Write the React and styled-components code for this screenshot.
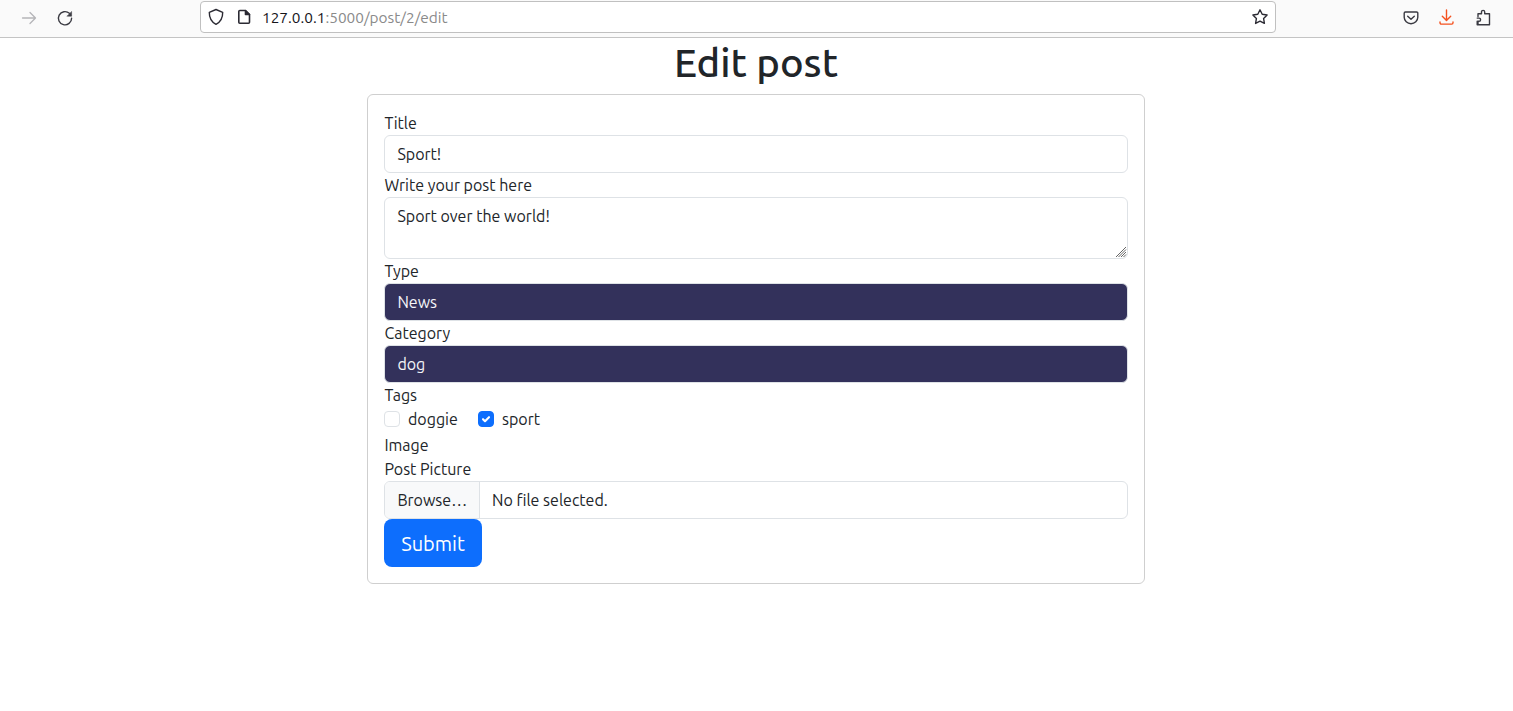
import React from 'react';
import styled, { createGlobalStyle } from 'styled-components';

const GlobalStyle = createGlobalStyle`
  *, *::before, *::after { box-sizing: border-box; }
  body {
    margin: 0;
    background: #fff;
    color: #212529;
    font-family: "Ubuntu", "Noto Sans", "Open Sans", sans-serif;
    font-size: 16px;
    line-height: 24px;
  }
`;

const Toolbar = styled.header`
  display: flex;
  height: 38px;
  padding: 1px 21px 0 20px;
  background: #fafafa;
  border-bottom: 1px solid #c4c4c4;
`;

const NavButtons = styled.div`
  display: flex;
  align-items: center;
  gap: 18px;
  width: 180px;
  height: 33px;
`;

const AddressBar = styled.div`
  display: flex;
  align-items: center;
  width: 1076px;
  height: 32px;
  padding: 0 6px 0 7px;
  background: #fff;
  border: 1px solid #c0c0c0;
  border-radius: 4px;
`;

const Url = styled.div`
  flex: 1;
  padding: 1px 0 0 9px;
  font-size: 15.4px;
  color: #8a8a8a;
  white-space: nowrap;
`;

const Host = styled.span`
  color: #15141a;
`;

const ToolbarActions = styled.div`
  display: flex;
  align-items: center;
  justify-content: flex-end;
  gap: 18px;
  flex: 1;
  height: 33px;
`;

const Icon = styled.svg`
  display: block;
  flex: none;
  width: 18px;
  height: 18px;
  margin-left: ${(p) => p.$left || 0}px;
  fill: none;
  stroke: ${(p) => p.$color || '#2b2a33'};
  stroke-width: ${(p) => p.$weight || 1.4};
  stroke-linecap: round;
  stroke-linejoin: round;
`;

const Page = styled.main`
  display: flex;
  flex-direction: column;
  align-items: center;
`;

const Heading = styled.h1`
  height: 48px;
  margin: 0 1px 8px 0;
  font-size: 40px;
  font-weight: 500;
  line-height: 50px;
`;

const Card = styled.form`
  display: flex;
  flex-direction: column;
  width: 778px;
  margin-right: 1px;
  padding: 16px;
  border: 1px solid #cfcfcf;
  border-radius: 6px;
`;

const Text = styled.span`
  white-space: nowrap;
`;

const Label = styled.label`
  display: block;
  height: 24px;
  padding-left: 0.4px;
`;

const Field = styled.div`
  display: flex;
  height: 38px;
  padding: 6px 12.4px;
  background: ${(p) => (p.$dark ? '#33315b' : '#fff')};
  color: ${(p) => (p.$dark ? '#f5f5f8' : '#212529')};
  border: 1px solid #dee2e6;
  border-radius: 6px;
`;

const TextArea = styled(Field)`
  position: relative;
  height: 62px;
`;

const Grip = styled.svg`
  position: absolute;
  right: 0;
  bottom: 0;
  width: 12px;
  height: 12px;
  stroke: #666;
  stroke-width: 1;
  fill: none;
`;

const Options = styled.div`
  display: flex;
  height: 26px;
`;

const Option = styled.label`
  display: flex;
  width: 94px;
  gap: 8px;
`;

const Box = styled.span`
  display: block;
  width: 16px;
  height: 16px;
  margin-top: 4px;
  background: ${(p) => (p.$checked ? '#0d6efd' : '#fff')};
  border: 1px solid ${(p) => (p.$checked ? '#0d6efd' : '#dee2e6')};
  border-radius: 4px;
`;

const Tick = styled.svg`
  display: block;
  width: 14px;
  height: 14px;
  fill: none;
  stroke: #fff;
  stroke-width: 2.1;
  stroke-linecap: round;
  stroke-linejoin: round;
`;

const FileField = styled(Field)`
  padding: 0;
  overflow: hidden;
`;

const Browse = styled.div`
  width: 95px;
  padding: 6px 0 6px 12.4px;
  background: #f8f9fa;
  border-right: 1px solid #dee2e6;
`;

const FileName = styled.div`
  padding: 6px 12px;
`;

const Submit = styled.button`
  width: 98px;
  height: 48px;
  padding: 2px 0 0;
  background: #0d6efd;
  color: #fff;
  border: 0;
  border-radius: 8px;
  font-family: inherit;
  font-size: 20px;
  line-height: 30px;
`;

export default function App() {
  return (
    <>
      <GlobalStyle />
      <Toolbar>
        <NavButtons>
          <Icon viewBox="0 0 18 18" $color="#b5b5b8" $weight={1.3}>
            <path d="M2.5 9H15.5M10 3.5 15.5 9 10 14.5" />
          </Icon>
          <Icon viewBox="0 0 18 18" $color="#3a3a42">
            <path d="M15.6 9.2a6.6 6.6 0 1 1-2.2-4.9" />
            <path d="M15.6 2.8v4.4h-4.4z" fill="#3a3a42" strokeWidth=".5" />
          </Icon>
        </NavButtons>
        <AddressBar>
          <Icon viewBox="0 0 18 18" $left={-1}>
            <path d="M9 1.5 15.7 4.3C15.8 9.8 13.6 14 9 16.4 4.4 14 2.2 9.8 2.3 4.3Z" />
          </Icon>
          <Icon viewBox="0 0 18 18" $left={10} $weight={1.6}>
            <path d="M4.8 2.500h5.500L14.500 6.500v7.800a1 1 0 0 1-1 1H4.800a1 1 0 0 1-1-1V3.500a1 1 0 0 1 1-1Z" />
            <path d="M10.500 2.500v4h4z" fill="#2b2a33" />
          </Icon>
          <Url>
            <Host>127.0.0.1</Host>:5000/post/2/edit
          </Url>
          <Icon viewBox="0 0 18 18">
            <path d="m9 1.800 2.200 4.500 4.900.7-3.500 3.500.800 4.900L9 13.100l-4.400 2.300.8-4.900L1.900 7l4.900-.7Z" />
          </Icon>
        </AddressBar>
        <ToolbarActions>
          <Icon viewBox="0 0 18 18" $color="#3a3a42">
            <path d="M3.4 3h11.2a1.2 1.2 0 0 1 1.2 1.2V8.300a6.800 6.400 0 0 1-13.600 0V4.200A1.200 1.200 0 0 1 3.400 3Z" />
            <path d="m5.700 7.200 3.300 3.100 3.300-3.100" />
          </Icon>
          <Icon viewBox="0 0 18 18" $color="#f4511e">
            <path d="M8.500 1v10M4.300 7.200l4.200 4.200 4.200-4.200M2 13v.800a1.300 1.300 0 0 0 1.300 1.300h10.400a1.300 1.300 0 0 0 1.300-1.300V13" />
          </Icon>
          <Icon viewBox="0 0 18 18" $color="#3a3a42">
            <path d="M4 7.600V4.800h3.500V3a1.600 1.600 0 0 1 3.200 0v1.800h4.800v10.900H4V12.300h1a1.600 1.600 0 0 0 0-3.200H3.200M3.200 12.300V15.700H4M4 7.600" />
          </Icon>
        </ToolbarActions>
      </Toolbar>
      <Page>
        <Heading>Edit post</Heading>
        <Card>
          <Label><Text>Title</Text></Label>
          <Field><Text>Sport!</Text></Field>
          <Label><Text>Write your post here</Text></Label>
          <TextArea>
            <Text>Sport over the world!</Text>
            <Grip viewBox="0 0 12 12">
              <path d="M1 11 11 1M3.500 11 11 3.500M6 11l5-5M8.500 11 11 8.500" />
            </Grip>
          </TextArea>
          <Label><Text>Type</Text></Label>
          <Field $dark><Text>News</Text></Field>
          <Label><Text>Category</Text></Label>
          <Field $dark><Text>dog</Text></Field>
          <Label><Text>Tags</Text></Label>
          <Options>
            <Option>
              <Box />
              <Text>doggie</Text>
            </Option>
            <Option>
              <Box $checked>
                <Tick viewBox="0 0 14 14"><path d="m4 7.200 2 2 4-4" /></Tick>
              </Box>
              <Text>sport</Text>
            </Option>
          </Options>
          <Label><Text>Image</Text></Label>
          <Label><Text>Post Picture</Text></Label>
          <FileField>
            <Browse><Text>Browse…</Text></Browse>
            <FileName><Text>No file selected.</Text></FileName>
          </FileField>
          <Submit type="button"><Text>Submit</Text></Submit>
        </Card>
      </Page>
    </>
  );
}
